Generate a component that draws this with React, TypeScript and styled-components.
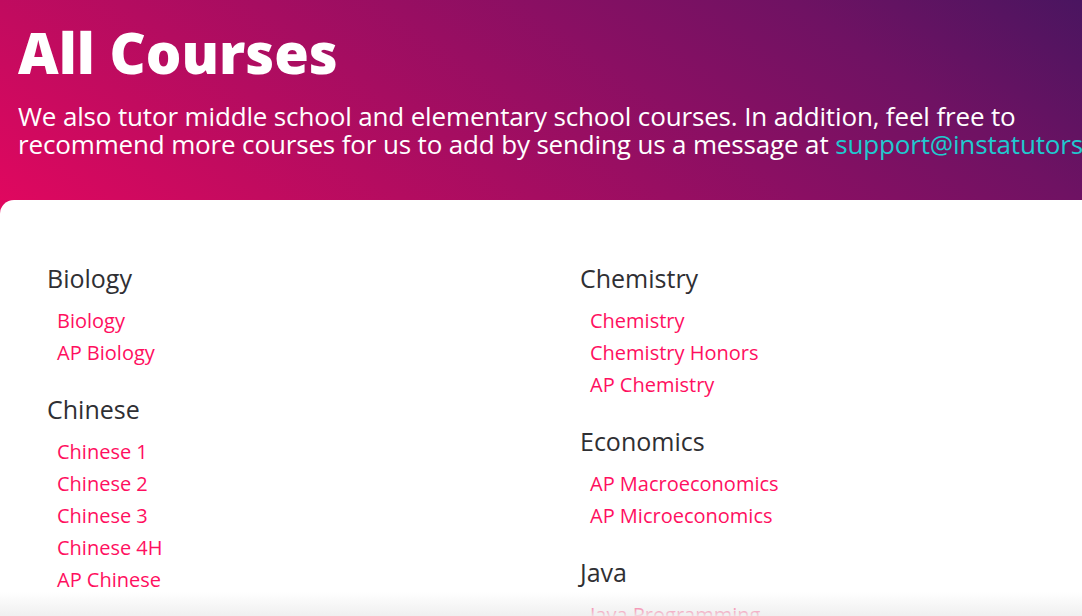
import React from "react";
import styled, { createGlobalStyle } from "styled-components";

const Global = createGlobalStyle`
  html, body { margin: 0; padding: 0; overflow: hidden; }
  body { font-family: "Open Sans", "Noto Sans", sans-serif; background: #fff; }
`;

const Page = styled.div`
  width: 1082px;
  height: 616px;
  overflow: hidden;
  position: relative;
  background-color: #fff;
  background-image: linear-gradient(35deg, #e2075f 0%, #c20b5f 21%, #8a0f63 60%, #6f1263 79%, #4a1560 100%);
  background-size: 100% 216px;
  background-repeat: no-repeat;
`;

const Header = styled.header`
  padding: 18px 0 0 18px;
  height: 182px;
  color: #fff;
`;

const Title = styled.h1`
  margin: 0;
  font-family: "Open Sans", sans-serif;
  font-weight: 800;
  font-size: 56px;
  line-height: 68px;
  letter-spacing: 0;
`;

const Intro = styled.p`
  margin: 16px 0 0;
  white-space: nowrap;
  font-size: 26px;
  line-height: 28px;
  font-weight: 400;
  letter-spacing: -0.15px;
`;

const Mail = styled.a`
  color: #20c9cf;
  text-decoration: none;
`;

const Body = styled.main`
  background: #fff;
  border-top-left-radius: 14px;
  height: 416px;
  padding: 62px 0 0 47px;
  box-sizing: border-box;
  display: grid;
  grid-template-columns: 533px 1fr;
`;

const Column = styled.div`
  display: flex;
  flex-direction: column;
`;

const Group = styled.section`
  margin-bottom: 24px;
`;

const Subject = styled.h2`
  margin: 0 0 11px;
  font-size: 25px;
  line-height: 32px;
  font-weight: 400;
  color: #2f2f33;
`;

const CourseList = styled.ul`
  list-style: none;
  margin: 0;
  padding: 0 0 0 10px;
`;

const Course = styled.li`
  font-size: 20px;
  line-height: 32px;
  color: #ff0f5f;
`;

const Fade = styled.div`
  position: absolute;
  left: 0;
  right: 0;
  bottom: 0;
  height: 24px;
  background: linear-gradient(to bottom, rgba(240,240,240,0), rgba(238,238,238,0.9));
  pointer-events: none;
`;

const left = [
  { name: "Biology", courses: ["Biology", "AP Biology"] },
  { name: "Chinese", courses: ["Chinese 1", "Chinese 2", "Chinese 3", "Chinese 4H", "AP Chinese"] },
  { name: "Computer Science", courses: ["AP Computer Science A"] },
];

const right = [
  { name: "Chemistry", courses: ["Chemistry", "Chemistry Honors", "AP Chemistry"] },
  { name: "Economics", courses: ["AP Macroeconomics", "AP Microeconomics"] },
  { name: "Java", courses: ["Java Programming"] },
];

type G = { name: string; courses: string[] };

const Col = ({ groups }: { groups: G[] }) => (
  <Column>
    {groups.map((g) => (
      <Group key={g.name}>
        <Subject>{g.name}</Subject>
        <CourseList>
          {g.courses.map((c) => (
            <Course key={c}>{c}</Course>
          ))}
        </CourseList>
      </Group>
    ))}
  </Column>
);

export default function App() {
  return (
    <Page>
      <Global />
      <Header>
        <Title>All Courses</Title>
        <Intro>
          We also tutor middle school and elementary school courses. In addition, feel free to
          <br />
          recommend more courses for us to add by sending us a message at{" "}
          <Mail href="#">support@instatutors.com</Mail>
        </Intro>
      </Header>
      <Body>
        <Col groups={left} />
        <Col groups={right} />
      </Body>
      <Fade />
    </Page>
  );
}
